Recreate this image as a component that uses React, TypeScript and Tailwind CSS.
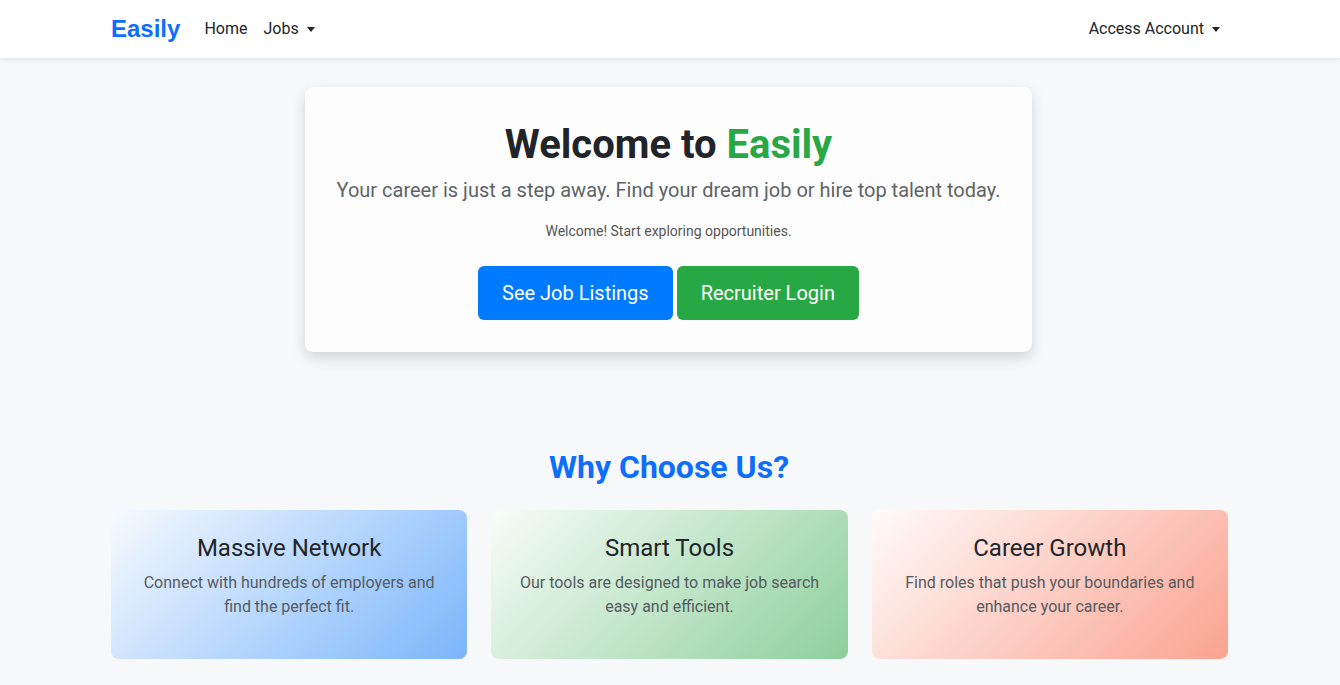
const FEATURES = [
  {
    title: 'Massive Network',
    text: 'Connect with hundreds of employers and find the perfect fit.',
    bg: 'bg-[linear-gradient(135deg,#f7faff,#7ab5fa)]',
  },
  {
    title: 'Smart Tools',
    text: 'Our tools are designed to make job search easy and efficient.',
    bg: 'bg-[linear-gradient(135deg,#f8fcf8,#8dcf9c)]',
  },
  {
    title: 'Career Growth',
    text: 'Find roles that push your boundaries and enhance your career.',
    bg: 'bg-[linear-gradient(135deg,#fffafa,#faa390)]',
  },
];

function Caret() {
  return (
    <span className="inline-block ml-[8px] align-middle w-0 h-0 border-x-[4px] border-x-transparent border-t-[5px] border-t-current" />
  );
}

export default function App() {
  return (
    <div className="min-h-[685px] bg-[#f7f8fa] font-['Roboto',sans-serif] text-[#212529]">
      {/* Navbar */}
      <nav className="bg-white h-[58px] shadow-[0_2px_4px_rgba(0,0,0,0.08)]">
        <div className="max-w-[1140px] mx-auto px-3 h-full flex items-center justify-between">
          <div className="flex items-center -ml-px">
            <span className="font-['Liberation_Sans',Arial,sans-serif] font-bold text-[24px] text-[#0d6efd] mr-[16px]">
              Easily
            </span>
            <a className="text-[16px] px-2 text-[#212529]">Home</a>
            <a className="text-[16px] px-2 text-[#212529]">
              Jobs
              <Caret />
            </a>
          </div>
          <a className="text-[16px] px-2 text-[#212529]">
            Access Account
            <Caret />
          </a>
        </div>
      </nav>

      {/* Hero */}
      <div className="flex justify-center pt-[29px] pr-[3px]">
        <div className="w-[727px] h-[265px] bg-[#fdfdfd] rounded-[8px] shadow-[0_6px_14px_rgba(0,0,0,0.15)] flex flex-col items-center pt-[34px]">
          <h1 className="text-[40px] font-bold leading-[1.2]">
            Welcome to <span className="text-[#28a745]">Easily</span>
          </h1>
          <p className="text-[20px] text-[#5f6368] mt-[6px] leading-[30px]">
            Your career is just a step away. Find your dream job or hire top talent today.
          </p>
          <p className="text-[14px] text-[#555] mt-[16px] leading-[21px]">Welcome! Start exploring opportunities.</p>
          <div className="flex gap-[4px] mt-[24px]">
            <button className="bg-[#007bff] text-white text-[20px] leading-[30px] px-6 py-3 rounded-[6px]">
              See Job Listings
            </button>
            <button className="bg-[#28a745] text-white text-[20px] leading-[30px] px-6 py-3 rounded-[6px]">
              Recruiter Login
            </button>
          </div>
        </div>
      </div>

      {/* Why choose us */}
      <div className="max-w-[1140px] mx-auto px-3 pt-[96px]">
        <h2 className="text-center text-[32px] font-bold text-[#0d6efd] leading-[38px] -ml-[2px]">Why Choose Us?</h2>
        <div className="grid grid-cols-3 gap-6 mt-[24px] -ml-px">
          {FEATURES.map((f) => (
            <div key={f.title} className={`${f.bg} h-[149px] rounded-[8px] p-6 text-center`}>
              <h3 className="text-[24px] leading-[29px] mb-2 text-[#212529]">{f.title}</h3>
              <p className="text-[16px] leading-[24px] text-[#555b61]">{f.text}</p>
            </div>
          ))}
        </div>
      </div>
    </div>
  );
}
